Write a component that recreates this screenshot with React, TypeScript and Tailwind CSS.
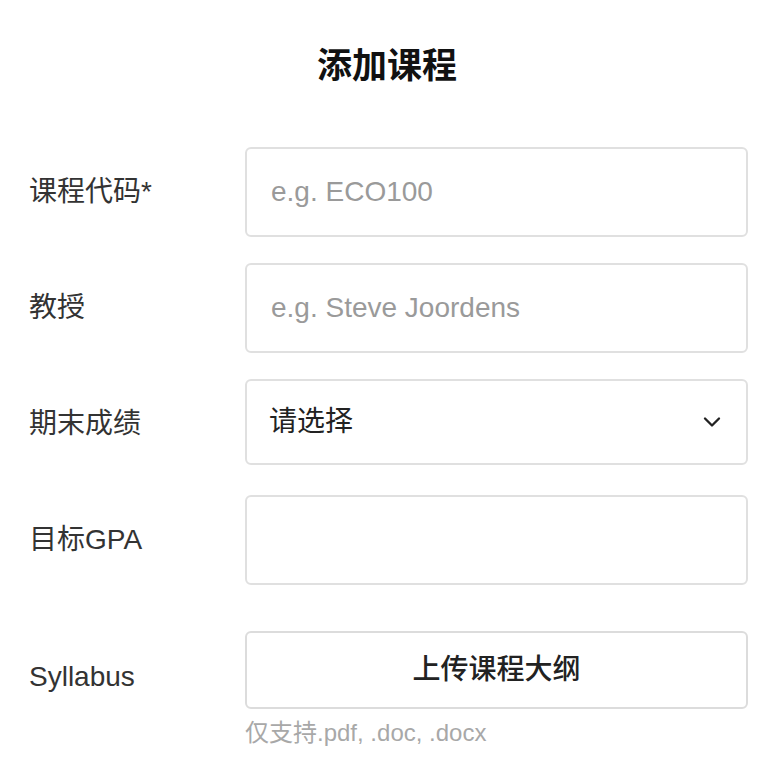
import React, { useState } from 'react';
import { ChevronDown } from 'lucide-react';

const FONT = { fontFamily: '"Liberation Sans", "Noto Sans CJK SC", sans-serif' };

function Row({ label, children, className = '', labelClass = '' }: { label: string; children: React.ReactNode; className?: string; labelClass?: string }) {
  return (
    <div className={`grid grid-cols-[216px_503px] items-center ${className}`}>
      <div className={`text-[28px] leading-none text-[#333] ${labelClass}`}>{label}</div>
      {children}
    </div>
  );
}

export default function App() {
  const [code, setCode] = useState('');
  const [prof, setProf] = useState('');
  const [gpa, setGpa] = useState('');

  return (
    <div className="w-[774px] h-[778px] bg-white pl-[29px]" style={FONT}>
      <h1 className="pt-[48px] pr-[29px] text-center text-[35px] leading-none font-bold text-[#111]">添加课程</h1>

      <div className="mt-[64px] flex flex-col">
        <Row label="课程代码*">
          <input
            value={code}
            onChange={(e) => setCode(e.target.value)}
            placeholder="e.g. ECO100"
            className="h-[90px] w-full rounded-[6px] border-2 border-[#e0e0e0] px-[24px] text-[28px] text-[#222] placeholder:text-[#9a9a9a] outline-none"
          />
        </Row>
        <Row label="教授" className="mt-[26px]">
          <input
            value={prof}
            onChange={(e) => setProf(e.target.value)}
            placeholder="e.g. Steve Joordens"
            className="h-[90px] w-full rounded-[6px] border-2 border-[#e0e0e0] px-[24px] text-[28px] text-[#222] placeholder:text-[#9a9a9a] outline-none"
          />
        </Row>
        <Row label="期末成绩" className="mt-[26px]" labelClass="pt-[4px]">
          <div className="flex h-[86px] w-full items-center justify-between rounded-[6px] border-2 border-[#e0e0e0] pl-[22px] pr-[20px]">
            <span className="text-[28px] text-[#222]">请选择</span>
            <ChevronDown size={28} strokeWidth={2} className="text-[#222]" />
          </div>
        </Row>
        <Row label="目标GPA" className="mt-[30px]">
          <input
            value={gpa}
            onChange={(e) => setGpa(e.target.value)}
            className="h-[90px] w-full rounded-[6px] border-2 border-[#e0e0e0] px-[24px] text-[28px] text-[#222] outline-none"
          />
        </Row>
        <Row label="Syllabus" className="mt-[46px]" labelClass="pt-[14px]">
          <button className="h-[78px] w-full rounded-[6px] border-2 border-[#dcdcdc] bg-white text-[28px] font-medium text-[#222]">
            上传课程大纲
          </button>
        </Row>
        <div className="grid grid-cols-[216px_503px]">
          <div />
          <div className="mt-[12px] text-[24px] leading-none text-[#a8a8a8]">仅支持.pdf, .doc, .docx</div>
        </div>
      </div>
    </div>
  );
}
